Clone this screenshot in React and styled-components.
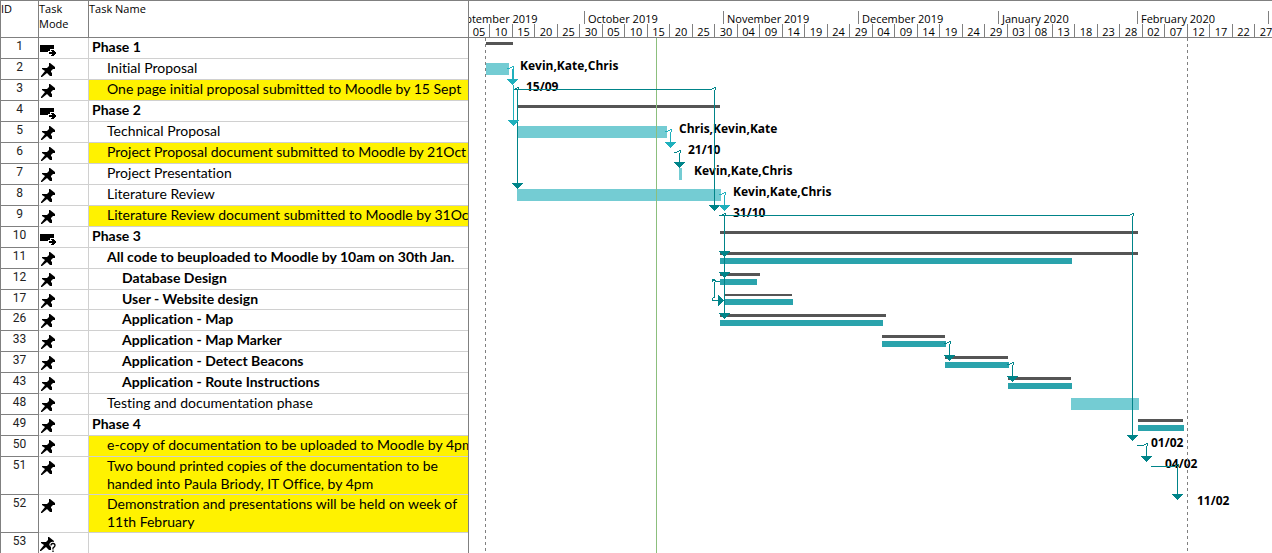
import React from 'react';
import styled, { createGlobalStyle, css } from 'styled-components';

const GlobalStyle = createGlobalStyle`
  *, *::before, *::after { box-sizing: border-box; }
  body { margin: 0; background: #fff; color: #000; }
`;

const colors = {
  frame: '#808080',
  rule: '#d0d0d0',
  highlight: '#fff200',
  summary: '#555555',
  task: '#74ccd3',
  manualSummary: '#2aa3ac',
  link: '#008489',
  linkLight: '#1fb0bd',
  statusLine: '#8cbf7d',
};

const uiFont = '"Open Sans", "Noto Sans", sans-serif';
const nameFont = 'Lato, "Open Sans", sans-serif';

const PANEL_LEFT = 469;
const HEADER_HEIGHT = 38;

const Page = styled.main`
  display: flex;
  min-height: 100vh;
  overflow: hidden;
`;

const TaskPane = styled.section`
  flex: 0 0 469px;
  display: flex;
  flex-direction: column;
  border-left: 1px solid ${colors.frame};
  border-right: 1px solid ${colors.frame};
`;

const TaskTable = styled.table`
  width: 100%;
  table-layout: fixed;
  border-collapse: separate;
  border-spacing: 0;
  font-family: ${nameFont};
  font-size: 14px;
  line-height: 18px;
  font-variant-ligatures: none;
`;

const Column = styled.col`
  width: ${({ $width }) => ($width ? `${$width}px` : 'auto')};
`;

const HeadCell = styled.th`
  height: ${HEADER_HEIGHT}px;
  padding: 0;
  border-top: 1px solid ${colors.frame};
  border-bottom: 1px solid ${colors.frame};
  border-right: ${({ $last }) => ($last ? 0 : 1)}px solid ${colors.frame};
  font: 400 11px/15px ${uiFont};
  text-align: left;
  vertical-align: top;
`;

const TaskRow = styled.tr`
  height: ${({ $height }) => $height}px;
`;

const cell = css`
  padding: 0;
  vertical-align: top;
  border-bottom: 1px solid ${colors.rule};
  tr:last-child > & { border-bottom: 0; }
`;

const IdCell = styled.td`
  ${cell}
  border-right: 1px solid ${colors.frame};
  border-bottom-color: ${colors.frame};
  font: 400 12px/16px Roboto, sans-serif;
  color: #222;
  text-align: center;
`;

const ModeCell = styled.td`
  ${cell}
  border-right: 1px solid ${colors.rule};
`;

const NameCell = styled.td`
  ${cell}
  padding-left: ${({ $level }) => 3 + $level * 15}px;
  overflow: hidden;
  white-space: ${({ $wrap }) => ($wrap ? 'normal' : 'nowrap')};
  font-weight: ${({ $bold }) => ($bold ? 700 : 400)};
  background: ${({ $marked }) => ($marked ? colors.highlight : 'transparent')};
`;

const ModeIcon = styled.svg`
  display: block;
  width: 19px;
  height: 19px;
`;

const ChartPane = styled.section`
  flex: 1 1 0;
  min-width: 0;
  display: flex;
  flex-direction: column;
`;

const Timescale = styled.header`
  height: ${HEADER_HEIGHT}px;
  padding-top: 10px;
  border-top: 1px solid ${colors.frame};
  border-bottom: 1px solid ${colors.frame};
  overflow: hidden;
  font: 400 11px/15px ${uiFont};
  white-space: nowrap;
`;

const MonthStrip = styled.div`
  display: flex;
  margin-left: -20px;
`;

const Month = styled.div`
  flex: 0 0 ${({ $width }) => $width}px;
  height: 13px;
  padding-left: 3px;
  border-left: 1px solid ${colors.frame};
`;

const DayStrip = styled.div`
  display: flex;
`;

const Day = styled.div`
  flex: 0 0 ${({ $width }) => $width}px;
  height: 13px;
  text-align: center;
  border-left: ${({ $first }) => ($first ? 0 : 1)}px solid ${colors.frame};
`;

const Chart = styled.svg`
  flex: 1 0 515px;
  display: block;
  width: 100%;
  overflow: hidden;
`;

const Label = styled.text`
  font: 700 12px ${uiFont};
  fill: #000;
`;

const tasks = [
  { id: 1, name: 'Phase 1', level: 0, bold: true, auto: true },
  { id: 2, name: 'Initial Proposal', level: 1 },
  { id: 3, name: 'One page initial proposal submitted to Moodle by 15 Sept', level: 1, marked: true },
  { id: 4, name: 'Phase 2', level: 0, bold: true, auto: true },
  { id: 5, name: 'Technical Proposal', level: 1 },
  { id: 6, name: 'Project Proposal document submitted to Moodle by 21Oct', level: 1, marked: true },
  { id: 7, name: 'Project Presentation', level: 1 },
  { id: 8, name: 'Literature Review', level: 1 },
  { id: 9, name: 'Literature Review document submitted to Moodle by 31Oct', level: 1, marked: true },
  { id: 10, name: 'Phase 3', level: 0, bold: true, auto: true },
  { id: 11, name: 'All code to beuploaded to Moodle by 10am on 30th Jan.', level: 1, bold: true },
  { id: 12, name: 'Database Design', level: 2, bold: true },
  { id: 17, name: 'User - Website design', level: 2, bold: true, height: 20 },
  { id: 26, name: 'Application - Map', level: 2, bold: true },
  { id: 33, name: 'Application - Map Marker', level: 2, bold: true },
  { id: 37, name: 'Application - Detect Beacons', level: 2, bold: true },
  { id: 43, name: 'Application - Route Instructions', level: 2, bold: true },
  { id: 48, name: 'Testing and documentation phase', level: 1 },
  { id: 49, name: 'Phase 4', level: 0, bold: true },
  { id: 50, name: 'e-copy of documentation to be uploaded to Moodle by 4pm', level: 1, marked: true },
  { id: 51, name: 'Two bound printed copies of the documentation to be handed into Paula Briody, IT Office, by 4pm', level: 1, marked: true, wrap: true, height: 38 },
  { id: 52, name: 'Demonstration and presentations will be held on week of 11th February', level: 1, marked: true, wrap: true, height: 38 },
  { id: 53, name: '', level: 0, unknown: true, height: 20 },
];

const months = [
  ['September 2019', 135], ['October 2019', 139], ['November 2019', 135],
  ['December 2019', 140], ['January 2020', 139], ['February 2020', 131], ['March 2020', 139],
];

const days = [
  '05', '10', '15', '20', '25', '30', '05', '10', '15', '20', '25', '30',
  '04', '09', '14', '19', '24', '29', '04', '09', '14', '19', '24', '29',
  '03', '08', '13', '18', '23', '28', '02', '07', '12', '17', '22', '27',
];

const dayWidth = (i) => (i === 0 ? 20 : i % 2 ? 23 : 22);

/* kind, left, right, top, height */
const bars = [
  ['summary', 486, 513, 42, 3],
  ['task', 486, 509, 63, 12],
  ['summary', 518, 720, 105, 3],
  ['task', 517, 667, 126, 12],
  ['task', 679, 682, 168, 12],
  ['task', 517, 721, 189, 12],
  ['summary', 720, 1138, 231, 3],
  ['summary', 720, 1138, 252, 3],
  ['manualSummary', 720, 1072, 258, 6],
  ['summary', 720, 760, 273, 3],
  ['manualSummary', 720, 757, 279, 6],
  ['summary', 724, 792, 294, 2],
  ['manualSummary', 724, 793, 299, 6],
  ['summary', 720, 886, 314, 3],
  ['manualSummary', 720, 883, 320, 6],
  ['summary', 882, 945, 335, 3],
  ['manualSummary', 882, 946, 341, 6],
  ['summary', 945, 1008, 356, 3],
  ['manualSummary', 945, 1009, 362, 6],
  ['summary', 1008, 1071, 377, 3],
  ['manualSummary', 1008, 1072, 383, 6],
  ['task', 1071, 1139, 398, 12],
  ['summary', 1138, 1183, 419, 3],
  ['manualSummary', 1138, 1184, 425, 6],
];

const labels = [
  ['Kevin,Kate,Chris', 520, 70],
  ['15/09', 526, 91],
  ['Chris,Kevin,Kate', 679, 133],
  ['21/10', 688, 154],
  ['Kevin,Kate,Chris', 694, 175],
  ['Kevin,Kate,Chris', 733, 196],
  ['31/10', 733, 217],
  ['01/02', 1151, 447],
  ['04/02', 1165, 468],
  ['11/02', 1197, 505],
];

/* start x, line y, drop x, arrow tops, light colour, drop width */
const links = [
  { from: 507, y: 68, x: 512, arrows: [79], light: true, width: 2 },
  { from: 513, y: 89, x: 517, arrows: [183] },
  { from: 513, y: 89, x: 714, arrows: [205] },
  { from: 665, y: 131, x: 670, arrows: [142], light: true },
  { from: 674, y: 152, x: 679, arrows: [162] },
  { from: 719, y: 194, x: 724, arrows: [205], light: true },
  { from: 719, y: 215, x: 724, arrows: [251, 272, 313] },
  { from: 719, y: 215, x: 1132, arrows: [435] },
  { from: 944, y: 343, x: 949, arrows: [355] },
  { from: 1007, y: 364, x: 1012, arrows: [376] },
  { from: 1137, y: 445, x: 1146, arrows: [456] },
  { from: 1151, y: 466, x: 1177, arrows: [494] },
];

function Link({ from, y, x, arrows, light, width = 1 }) {
  const last = arrows[arrows.length - 1];
  return (
    <g fill={light ? colors.linkLight : colors.link}>
      <rect x={from} y={y} width={x - from - 2} height="1" />
      <path d={`M${x - 2} ${y - 1}h2v-1h2v3h-1v-2h-1v1h-2z`} />
      <rect x={x} y={y + 1} width={width} height={last - y} />
      {arrows.map((top) => (
        <path key={top} d={`M${x - 5} ${top}h11v1h-1v1h-1v1h-1v1h-1v1h-1v1h-1v-1h-1v-1h-1v-1h-1v-1h-1v-1h-1z`} />
      ))}
    </g>
  );
}

const PIN = 'M8 0H9L14 4V6H12L10 8V9L11 10V13H9L6 10L1 14H0V13L4 8L1 6V5H6L8 3Z';

function TaskMode({ auto, unknown }) {
  if (auto) {
    return (
      <ModeIcon viewBox="0 0 19 19" role="img" aria-label="Auto scheduled" shapeRendering="crispEdges">
        <path d="M1 7h14v7H1z" />
        <path d="M9 13h2v-2h4v1h1v1h1v1h1v3h-1v1H9z" fill="#fff" />
        <path d="M10 14h3v-1h-1v-1h3v1h1v1h1v2h-1v1h-1v1h-3v-1h1v-1h-3z" />
      </ModeIcon>
    );
  }
  return (
    <ModeIcon viewBox="0 0 19 19" role="img" aria-label="Manually scheduled">
      <path d={PIN} transform={unknown ? 'translate(1 4)' : 'translate(2 4)'} />
      {unknown && (
        <g fill="none">
          <path d="M12 12.500Q12 10.500 14 10.500T16 12.500Q16 13.500 14 15V16.500M14 17.500V19" stroke="#fff" strokeWidth="3.500" />
          <path d="M12 12.500Q12 10.500 14 10.500T16 12.500Q16 13.500 14 15V16.500M14 17.500V19" stroke="#000" strokeWidth="1.300" />
        </g>
      )}
    </ModeIcon>
  );
}

function TaskSheet() {
  return (
    <TaskPane aria-label="Task list">
      <TaskTable>
        <colgroup>
          <Column $width={38} />
          <Column $width={50} />
          <Column />
        </colgroup>
        <thead>
          <tr>
            <HeadCell scope="col">ID</HeadCell>
            <HeadCell scope="col">Task<br />Mode</HeadCell>
            <HeadCell scope="col" $last>Task Name</HeadCell>
          </tr>
        </thead>
        <tbody>
          {tasks.map((t) => (
            <TaskRow key={t.id} $height={t.height || 21}>
              <IdCell>{t.id}</IdCell>
              <ModeCell><TaskMode auto={t.auto} unknown={t.unknown} /></ModeCell>
              <NameCell $level={t.level} $bold={t.bold} $marked={t.marked} $wrap={t.wrap}>{t.name}</NameCell>
            </TaskRow>
          ))}
        </tbody>
      </TaskTable>
    </TaskPane>
  );
}

function GanttChart() {
  return (
    <ChartPane aria-label="Gantt chart">
      <Timescale>
        <MonthStrip>
          {months.map(([name, width]) => <Month key={name} $width={width}>{name}</Month>)}
        </MonthStrip>
        <DayStrip>
          {days.map((day, i) => <Day key={i} $first={i === 0} $width={dayWidth(i)}>{day}</Day>)}
        </DayStrip>
      </Timescale>
      <Chart role="img" aria-label="Project schedule">
        <g transform={`translate(${-PANEL_LEFT} ${-HEADER_HEIGHT})`}>
          <g shapeRendering="crispEdges">
            {bars.map(([kind, left, right, top, height]) => (
              <rect key={`${left}-${top}`} x={left} y={top} width={right - left} height={height} fill={colors[kind]} />
            ))}
          </g>
          {labels.map(([text, x, y]) => <Label key={`${x}-${y}`} x={x} y={y}>{text}</Label>)}
          <g shapeRendering="crispEdges">
            <path d="M485.500 38V2000M1187.500 38V2000" stroke={colors.frame} strokeDasharray="3 3" />
            <path d="M656.500 38V2000" stroke={colors.statusLine} />
            {links.map((link) => <Link key={`${link.x}-${link.y}`} {...link} />)}
            <rect x="513" y="85" width="1" height="36" fill={colors.linkLight} />
            <path d="M508 120h11v1h-1v1h-1v1h-1v1h-1v1h-1v1h-1v-1h-1v-1h-1v-1h-1v-1h-1v-1h-1z" fill={colors.linkLight} />
            <g fill={colors.link}>
              <path d="M716 281h4v1h-4zM712 279h3v1h1v2h-1v-1h-2v1h-1z" />
              <path d="M714 282h1v16h-1zM713 297h1v1h-1v2h2v1h-3v-3h1z" />
              <path d="M715 300h4v1h-4z" />
              <path d="M718 295h1v1h1v1h1v1h1v1h1v1h1v1h-1v1h-1v1h-1v1h-1v1h-1v1h-1z" />
            </g>
          </g>
        </g>
      </Chart>
    </ChartPane>
  );
}

export default function App() {
  return (
    <Page>
      <GlobalStyle />
      <TaskSheet />
      <GanttChart />
    </Page>
  );
}
